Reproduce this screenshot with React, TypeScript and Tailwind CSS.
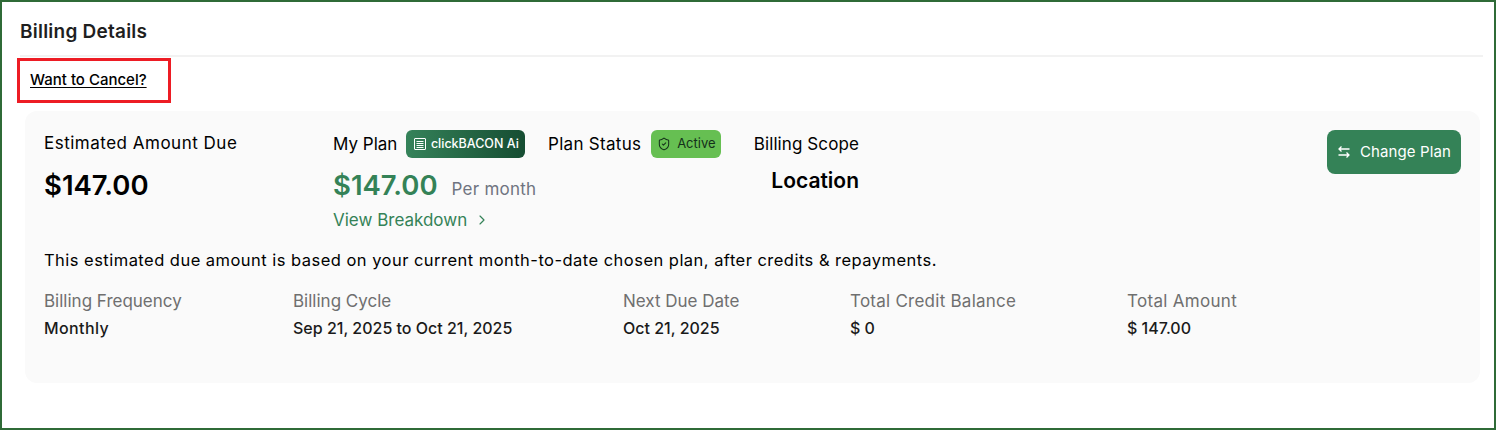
import {FC} from "react";
import {ChevronRight, ShieldCheck} from "lucide-react";

const details = [
  {label: "Billing Frequency", value: "Monthly", tracking: "", valueTracking: "tracking-[0.4px]"},
  {label: "Billing Cycle", value: "Sep 21, 2025 to Oct 21, 2025", tracking: "", valueTracking: ""},
  {label: "Next Due Date", value: "Oct 21, 2025", tracking: "", valueTracking: ""},
  {label: "Total Credit Balance", value: "$ 0", tracking: "tracking-[0.25px]", valueTracking: ""},
  {label: "Total Amount", value: "$ 147.00", tracking: "tracking-[0.3px]", valueTracking: ""},
];

const PlanIcon: FC = () => (
  <svg width="14" height="14" viewBox="0 0 14 14" fill="none" stroke="currentColor" strokeWidth="1">
    <rect x="1.5" y="1.5" width="11" height="11" rx="0.5" />
    <path d="M3.5 4.5h7M3.5 6.5h7M3.5 8.5h7M3.5 10.5h7" />
  </svg>
);

// top arrow runs left, bottom arrow runs right
const SwapIcon: FC = () => (
  <svg width="14" height="14" viewBox="0 0 14 14" fill="none" stroke="currentColor" strokeWidth="1.3">
    <path d="M12.5 4H2M4.5 1.5 2 4l2.5 2.5" />
    <path d="M1.5 10H12M9.5 7.5 12 10l-2.5 2.5" />
  </svg>
);

export default function App() {
  return (
    <div className="h-[430px] w-[1496px] overflow-hidden border-2 border-[#2f6b37] bg-white pl-[18px] pr-[11px] font-['Inter',sans-serif] text-black">
      {/* header */}
      <div className="flex h-[55px] items-center border-b-2 border-[#f2f2f2] pt-[7px]">
        <h1 className="text-[19px] font-semibold leading-[24px] tracking-[0.23px] text-[#1f1f1f]">Billing Details</h1>
      </div>

      <div className="-ml-[3px] mt-[1px] flex h-[45px] w-[154px] items-center border-[3px] border-[#ed1c24] pb-[2px] pl-[10px]">
        <a className="text-[15px] font-medium leading-[18px] underline underline-offset-2">Want to Cancel?</a>
      </div>

      {/* card */}
      <div className="ml-[5px] mt-[8px] h-[272px] w-[1455px] rounded-[12px] bg-[#fafafa] px-[19px] pt-[19px]">
        <div className="flex items-start">
          <div className="w-[289px]">
            <div className="mt-[2px] text-[17px] leading-[22px] tracking-[0.5px]">Estimated Amount Due</div>
            <div className="mt-[13px] text-[27.5px] font-semibold leading-[36px]">$147.00</div>
          </div>

          <div className="w-[215px]">
            <div className="flex items-center gap-[9px]">
              <span className="text-[17px] leading-[28px]">My Plan</span>
              <span className="flex h-[28px] w-[119px] items-center justify-center gap-[4px] rounded-[6px] bg-gradient-to-r from-[#35835a] to-[#164d32] text-[12.5px] font-medium text-white">
                <PlanIcon />
                clickBACON Ai
              </span>
            </div>
            <div className="mt-[9px] flex items-baseline gap-[14px]">
              <span className="text-[27.5px] font-semibold leading-[36px] text-[#348257]">$147.00</span>
              <span className="text-[17px] leading-[22px] tracking-[0.25px] text-[#6f7480]">Per month</span>
            </div>
            <div className="mt-[6px] flex items-center gap-[7px] text-[17px] leading-[22px] text-[#348257]">
              View Breakdown
              <ChevronRight size={16} strokeWidth={1.75} />
            </div>
          </div>

          <div className="flex w-[206px] items-center gap-[10px]">
            <span className="text-[17px] leading-[28px] tracking-[0.3px]">Plan Status</span>
            <span className="flex h-[28px] w-[70px] items-center justify-center gap-[6px] rounded-[6px] bg-[#66bf52] text-[13px] text-[#14301a]">
              <ShieldCheck size={14} strokeWidth={1.75} />
              Active
            </span>
          </div>

          <div className="flex w-[105px] flex-col items-end">
            <span className="whitespace-nowrap text-[17px] leading-[28px] tracking-[0.1px]">Billing Scope</span>
            <span className="mt-[9px] text-[21px] font-semibold leading-[28px]">Location</span>
          </div>

          <button className="ml-auto flex h-[44px] w-[134px] items-center justify-center gap-[9px] rounded-[8px] bg-[#348257] text-[15px] tracking-[0.1px] text-white">
            <SwapIcon />
            Change Plan
          </button>
        </div>

        <p className="mt-[17px] whitespace-nowrap text-[16.5px] leading-[24px] tracking-[0.47px]">
          This estimated due amount is based on your current month-to-date chosen plan, after credits &amp; repayments.
        </p>

        <div className="mt-[17px] grid grid-cols-[249px_330px_227px_277px_auto]">
          {details.map((d) => (
            <div key={d.label}>
              <div className={`text-[17px] leading-[24px] text-[#6f6f6f] ${d.tracking}`}>{d.label}</div>
              <div className={`mt-[3px] text-[16px] font-medium leading-[24px] text-[#1a1a1a] ${d.valueTracking}`}>{d.value}</div>
            </div>
          ))}
        </div>
      </div>
    </div>
  );
}
